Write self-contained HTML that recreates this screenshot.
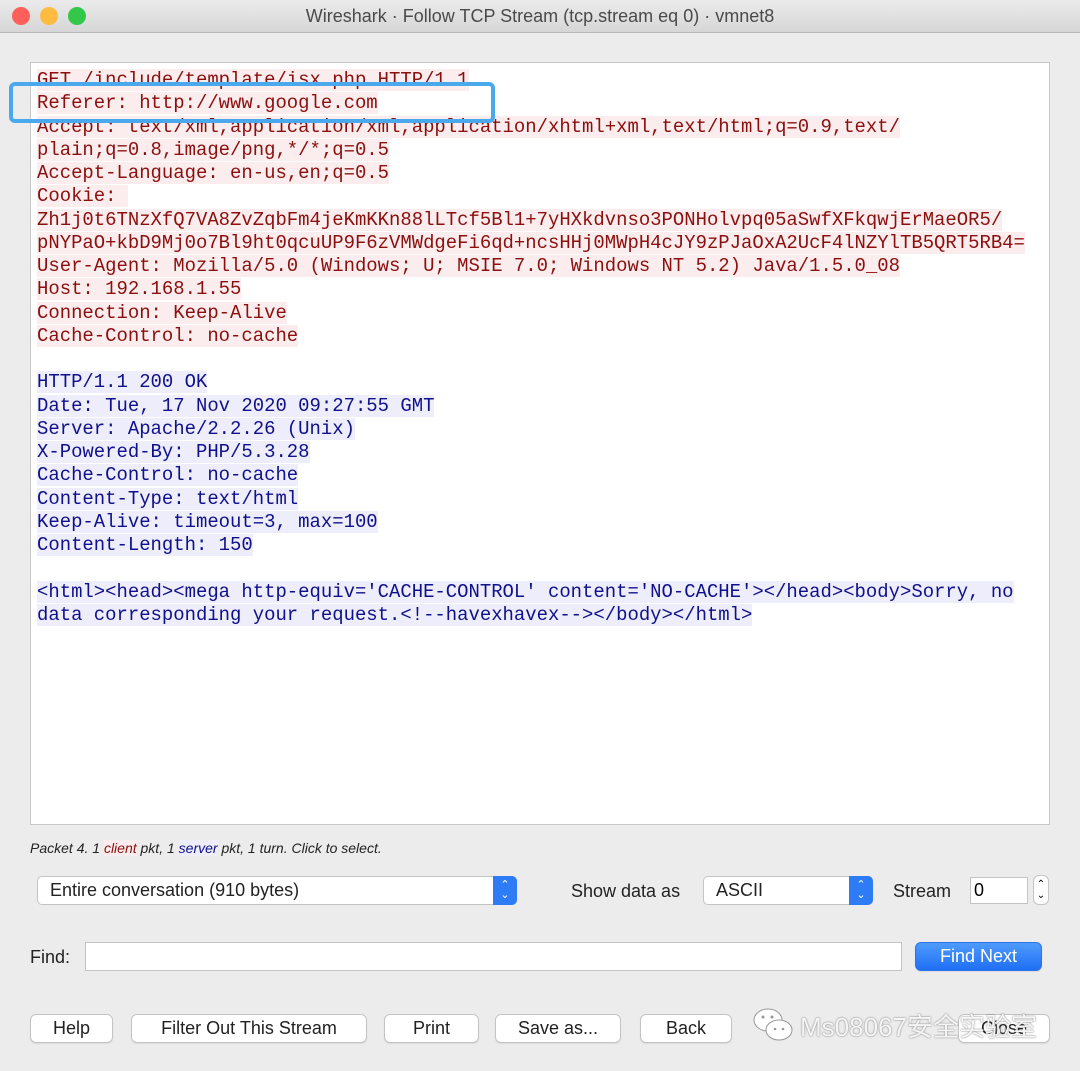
<!DOCTYPE html>
<html><head><meta charset="utf-8">
<style>
*{margin:0;padding:0;box-sizing:border-box}
body{width:1080px;height:1071px;background:#ececec;font-family:"Liberation Sans",sans-serif;position:relative;overflow:hidden}
.title{position:absolute;left:0;top:0;width:1080px;height:33px;background:linear-gradient(#ebebeb,#d6d6d6);border-bottom:1px solid #b8b8b8;text-align:center;font-size:18px;line-height:33px;color:#4a4a4a}
.dot{position:absolute;top:7px;width:18px;height:18px;border-radius:50%}
.box{position:absolute;left:30px;top:62px;width:1020px;height:763px;background:#fff;border:1px solid #c8c8c8}
.ln{position:absolute;left:37px;height:23.25px;font-family:"Liberation Mono",monospace;font-size:18.93px;line-height:23.25px;white-space:pre}
.c span{background:#fbeded;color:#8b0f0f}
.s span{background:#ededfb;color:#10108a}
.hl{position:absolute;left:9px;top:82px;width:486px;height:41px;border:4px solid #4aa8ec;border-radius:6px}
.btn{position:absolute;height:29px;background:#fff;border:1px solid #c4c4c4;border-radius:6px;font-size:18px;line-height:27px;text-align:center;color:#222;box-shadow:0 1px 1px rgba(0,0,0,.08)}
.sel{position:absolute;height:29px;background:#fff;border:1px solid #c4c4c4;border-radius:5px;font-size:18px;line-height:27px;padding-left:12px;color:#222}
.arr{position:absolute;right:-1px;top:-1px;width:24px;height:29px;background:#2d7cf6;border-radius:0 5px 5px 0;color:#fff;font-size:11px;line-height:10px;text-align:center;padding-top:4px}
.lbl{position:absolute;font-size:18px;color:#222}
</style></head><body>
<div class="title">Wireshark · Follow TCP Stream (tcp.stream eq 0) · vmnet8</div>
<div class="dot" style="left:12px;background:#fc605b"></div>
<div class="dot" style="left:40px;background:#fdbc40"></div>
<div class="dot" style="left:68px;background:#34c84a"></div>
<div class="box"></div>
<div class="ln c" style="top:69px"><span>GET /include/template/isx.php HTTP/1.1</span></div>
<div class="ln c" style="top:92.25px"><span>Referer: http://www.google.com</span></div>
<div class="ln c" style="top:115.5px"><span>Accept: text/xml,application/xml,application/xhtml+xml,text/html;q=0.9,text/</span></div>
<div class="ln c" style="top:138.75px"><span>plain;q=0.8,image/png,*/*;q=0.5</span></div>
<div class="ln c" style="top:162px"><span>Accept-Language: en-us,en;q=0.5</span></div>
<div class="ln c" style="top:185.25px"><span>Cookie: </span></div>
<div class="ln c" style="top:208.5px"><span>Zh1j0t6TNzXfQ7VA8ZvZqbFm4jeKmKKn88lLTcf5Bl1+7yHXkdvnso3PONHolvpq05aSwfXFkqwjErMaeOR5/</span></div>
<div class="ln c" style="top:231.75px"><span>pNYPaO+kbD9Mj0o7Bl9ht0qcuUP9F6zVMWdgeFi6qd+ncsHHj0MWpH4cJY9zPJaOxA2UcF4lNZYlTB5QRT5RB4=</span></div>
<div class="ln c" style="top:255px"><span>User-Agent: Mozilla/5.0 (Windows; U; MSIE 7.0; Windows NT 5.2) Java/1.5.0_08</span></div>
<div class="ln c" style="top:278.25px"><span>Host: 192.168.1.55</span></div>
<div class="ln c" style="top:301.5px"><span>Connection: Keep-Alive</span></div>
<div class="ln c" style="top:324.75px"><span>Cache-Control: no-cache</span></div>
<div class="ln s" style="top:371.25px"><span>HTTP/1.1 200 OK</span></div>
<div class="ln s" style="top:394.5px"><span>Date: Tue, 17 Nov 2020 09:27:55 GMT</span></div>
<div class="ln s" style="top:417.75px"><span>Server: Apache/2.2.26 (Unix)</span></div>
<div class="ln s" style="top:441px"><span>X-Powered-By: PHP/5.3.28</span></div>
<div class="ln s" style="top:464.25px"><span>Cache-Control: no-cache</span></div>
<div class="ln s" style="top:487.5px"><span>Content-Type: text/html</span></div>
<div class="ln s" style="top:510.75px"><span>Keep-Alive: timeout=3, max=100</span></div>
<div class="ln s" style="top:534px"><span>Content-Length: 150</span></div>
<div class="ln s" style="top:580.5px"><span>&lt;html&gt;&lt;head&gt;&lt;mega http-equiv='CACHE-CONTROL' content='NO-CACHE'&gt;&lt;/head&gt;&lt;body&gt;Sorry, no</span></div>
<div class="ln s" style="top:603.75px"><span>data corresponding your request.&lt;!--havexhavex--&gt;&lt;/body&gt;&lt;/html&gt;</span></div>
<div class="hl"></div>
<div style="position:absolute;left:30px;top:840px;font-size:14px;font-style:italic;color:#222">Packet 4. 1 <span style="color:#8b0f0f;background:#fbeded">client</span> pkt, 1 <span style="color:#10108a;background:#ededfb">server</span> pkt, 1 turn. Click to select.</div>
<div class="sel" style="left:37px;top:876px;width:480px">Entire conversation (910 bytes)<div class="arr">⌃<br>⌄</div></div>
<div class="lbl" style="left:571px;top:881px">Show data as</div>
<div class="sel" style="left:703px;top:876px;width:170px">ASCII<div class="arr">⌃<br>⌄</div></div>
<div class="lbl" style="left:893px;top:881px">Stream</div>
<div style="position:absolute;left:970px;top:877px;width:58px;height:27px;background:#fff;border:1px solid #c4c4c4;font-size:18px;line-height:25px;padding-left:3px">0</div>
<div style="position:absolute;left:1033px;top:875px;width:16px;height:30px;background:#fff;border:1px solid #c4c4c4;border-radius:6px;font-size:10px;line-height:11px;text-align:center;padding-top:3px">⌃<br>⌄</div>
<div class="lbl" style="left:30px;top:947px">Find:</div>
<div style="position:absolute;left:85px;top:942px;width:817px;height:29px;background:#fff;border:1px solid #c4c4c4"></div>
<div class="btn" style="left:915px;top:942px;width:127px;background:linear-gradient(#4f9bfb,#1f6ff5);border-color:#2b74ee;color:#fff">Find Next</div>
<div class="btn" style="left:30px;top:1014px;width:83px">Help</div>
<div class="btn" style="left:131px;top:1014px;width:236px">Filter Out This Stream</div>
<div class="btn" style="left:384px;top:1014px;width:95px">Print</div>
<div class="btn" style="left:495px;top:1014px;width:126px">Save as...</div>
<div class="btn" style="left:640px;top:1014px;width:92px">Back</div>
<div class="btn" style="left:958px;top:1014px;width:92px">Close</div>
<svg style="position:absolute;left:752px;top:1006px" width="44" height="40" viewBox="0 0 44 40"><g fill="#fff" stroke="#999" stroke-width="1"><ellipse cx="16" cy="14" rx="14" ry="11"/><ellipse cx="27" cy="24" rx="13" ry="10"/></g><g fill="#999"><circle cx="11" cy="11" r="1.5"/><circle cx="20" cy="11" r="1.5"/><circle cx="23" cy="23" r="1.3"/><circle cx="31" cy="23" r="1.3"/></g></svg>
<div style="position:absolute;left:800px;top:1007px;font-size:26px;color:rgba(255,255,255,.92);text-shadow:0 0 1px #777,0 0 2px rgba(0,0,0,.3);font-family:'Liberation Sans','Noto Sans CJK SC',sans-serif">Ms08067安全实验室</div>
</body></html>
